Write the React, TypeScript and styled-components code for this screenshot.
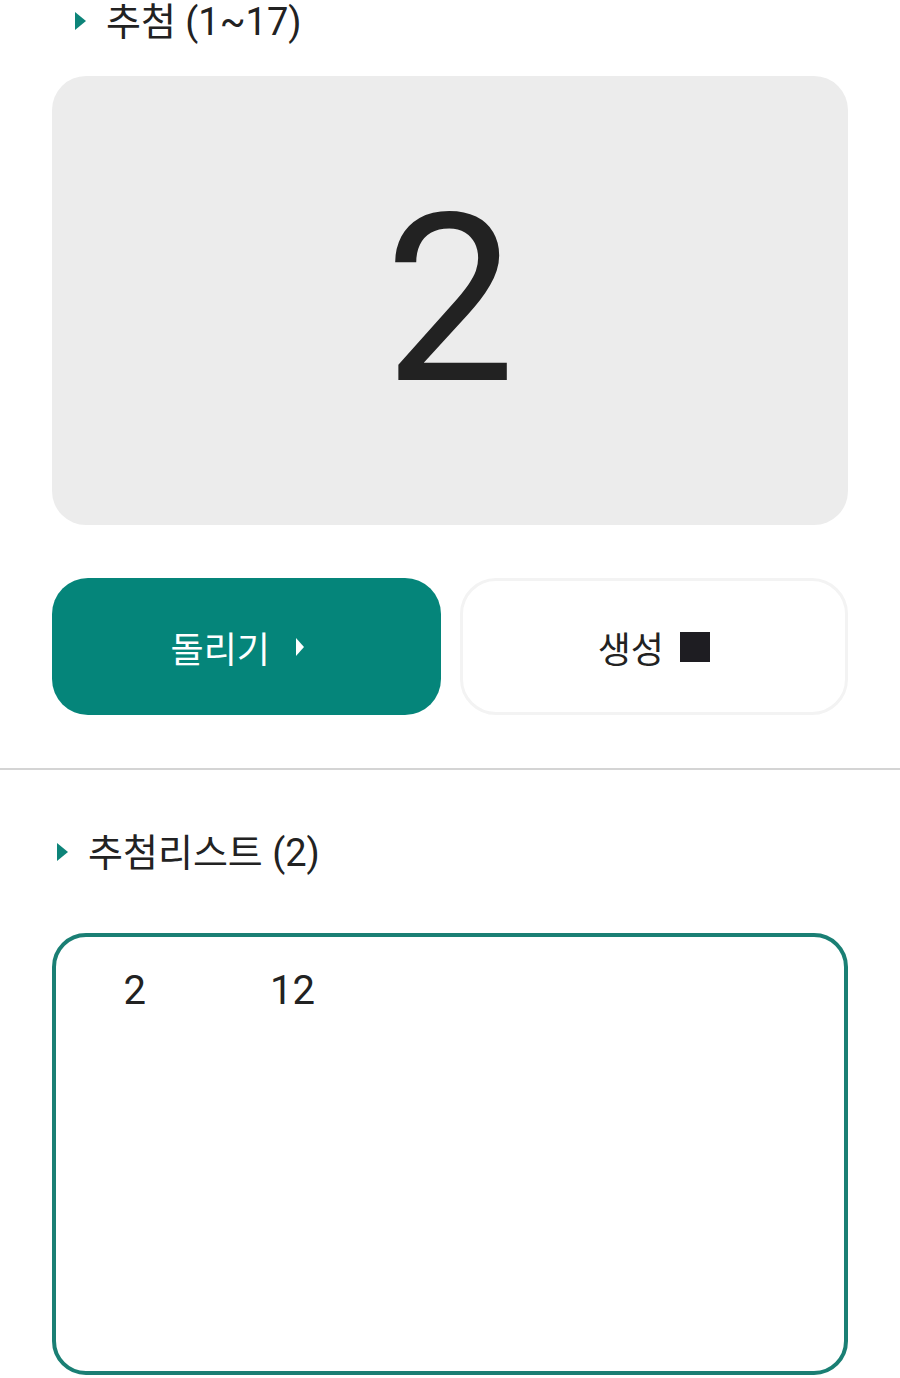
import React from 'react'
import styled, { createGlobalStyle } from 'styled-components'

const GlobalStyle = createGlobalStyle`
  body {
    margin: 0;
    background: #ffffff;
    font-family: Roboto, "Noto Sans CJK KR", sans-serif;
    color: #222222;
  }
`

const Page = styled.div`
  display: flex;
  flex-direction: column;
  width: 900px;
  overflow: hidden;
`

const Section = styled.div`
  display: flex;
  flex-direction: column;
  padding: 0 52px;
`

const Title = styled.div<{ $indent: number; $top?: number }>`
  display: flex;
  align-items: center;
  height: 42px;
  margin-top: ${p => p.$top ?? 0}px;
  padding-left: ${p => p.$indent}px;
  gap: 20px;
  font-size: 38px;
  color: #222222;
  white-space: nowrap;

  span {
    position: relative;
    top: -3px;
  }
`

const Caret = styled.i<{ $color?: string; $h?: number; $w?: number }>`
  display: inline-block;
  flex: none;
  width: 0;
  height: 0;
  border-top: ${p => (p.$h ?? 18) / 2}px solid transparent;
  border-bottom: ${p => (p.$h ?? 18) / 2}px solid transparent;
  border-left: ${p => p.$w ?? 11}px solid ${p => p.$color ?? '#0d8479'};
`

const Display = styled.div`
  display: flex;
  align-items: center;
  justify-content: center;
  margin-top: 34px;
  height: 449px;
  border-radius: 34px;
  background: #ececec;
  font-size: 233px;
  color: #222222;
  line-height: 1;
`

const ButtonRow = styled.div`
  display: grid;
  grid-template-columns: 1fr 1fr;
  gap: 19px;
  margin-top: 53px;
`

const Button = styled.button<{ $primary?: boolean }>`
  display: flex;
  align-items: center;
  justify-content: center;
  gap: ${p => (p.$primary ? 26 : 16)}px;
  height: 137px;
  padding: 0 ${p => (p.$primary ? 18 : 0)}px 0 0;
  border-radius: 36px;
  font-family: Roboto, "Noto Sans CJK KR", sans-serif;
  font-size: 36px;
  cursor: pointer;
  background: ${p => (p.$primary ? '#05857a' : '#ffffff')};
  color: ${p => (p.$primary ? '#ffffff' : '#222222')};
  border: ${p => (p.$primary ? 'none' : '3px solid #f3f3f3')};
`

const Square = styled.span`
  display: inline-block;
  width: 30px;
  height: 30px;
  background: #1e1d22;
`

const Divider = styled.hr`
  margin: 53px 0 0;
  border: none;
  height: 2px;
  background: #d4d4d4;
`

const ListBox = styled.div`
  display: grid;
  grid-template-columns: repeat(5, 1fr);
  align-content: start;
  margin-top: 60px;
  height: 442px;
  box-sizing: border-box;
  padding: 30px 0 0;
  border: 4px solid #1a7f74;
  border-radius: 34px;
  font-size: 40px;
  line-height: 48px;
`

const ListItem = styled.div`
  text-align: center;
  color: #222222;
`

const picks = [2, 12]

export default function App() {
  return (
    <Page>
      <GlobalStyle />
      <Section>
        <Title $indent={23}>
          <Caret />
          <span>추첨 (1~17)</span>
        </Title>
        <Display>2</Display>
        <ButtonRow>
          <Button $primary>
            <span>돌리기</span>
            <Caret $color="#ffffff" $h={19} $w={8} />
          </Button>
          <Button>
            <span>생성</span>
            <Square />
          </Button>
        </ButtonRow>
      </Section>
      <Divider />
      <Section>
        <Title $indent={5} $top={61}>
          <Caret />
          <span>추첨리스트 ({picks.length})</span>
        </Title>
        <ListBox>
          {picks.map(n => (
            <ListItem key={n}>{n}</ListItem>
          ))}
        </ListBox>
      </Section>
    </Page>
  )
}
